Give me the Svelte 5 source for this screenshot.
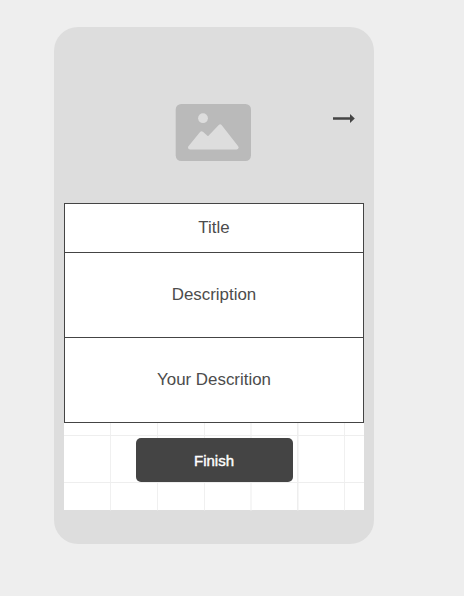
<script>
  const rows = [
    { label: 'Title', kind: 'title' },
    { label: 'Description', kind: 'text' },
    { label: 'Your Descrition', kind: 'text' }
  ];
  const columns = [
    { x: 46, w: 1, c: '#f0f0f0' },
    { x: 93, w: 1, c: '#f0f0f0' },
    { x: 140, w: 1, c: '#f0f0f0' },
    { x: 186, w: 2, c: '#f6f6f6' },
    { x: 233, w: 1.5, c: '#eeeeee' },
    { x: 280, w: 1, c: '#f0f0f0' }
  ];
  const lines = [12, 59];
</script>

<main>
  <section class="phone">
    <header>
      <svg class="picture" width="76" height="58" viewBox="0 0 76 58" aria-hidden="true">
        <rect x="0.7" y="0" width="75.3" height="57" rx="5.5" fill="#bababa" />
        <circle cx="28" cy="14.2" r="4.9" fill="#dddddd" />
        <path d="M15 43.4L26.6 29.3L33 35.1L45.2 22.4L61.6 43.4Z" fill="#dddddd" stroke="#dddddd" stroke-width="4" stroke-linejoin="round" />
      </svg>
      <svg class="arrow" width="24" height="12" viewBox="0 0 24 12" aria-hidden="true">
        <path d="M1 5.2H18V2L22.8 6.5L18 11V7.8H1Z" fill="#444444" />
      </svg>
    </header>
    <div class="rows">
      {#each rows as row}
        <div class="row {row.kind}">{row.label}</div>
      {/each}
    </div>
    <footer>
      <svg class="grid" width="300" height="88" viewBox="0 0 300 88" aria-hidden="true">
        {#each columns as col}
          <rect x={col.x} y="0" width={col.w} height="87" fill={col.c} />
          <rect x={col.x} y="87" width={col.w} height="1" fill="#e4e4e4" />
        {/each}
        {#each lines as y}
          <rect x="0" {y} width="300" height="1" fill="#eeeeee" />
        {/each}
      </svg>
      <button type="button">Finish</button>
    </footer>
  </section>
</main>

<style>
  :global(body) {
    background: #eeeeee;
  }
  main {
    box-sizing: border-box;
    height: 596px;
    padding: 27px 0 0 54px;
    background: #eeeeee;
    font-family: 'Liberation Sans', Arial, sans-serif;
  }
  .phone {
    box-sizing: border-box;
    width: 320px;
    height: 517px;
    padding: 0 10px;
    border-radius: 24px;
    background: #dddddd;
  }
  header {
    display: flex;
    justify-content: space-between;
    align-items: flex-start;
    box-sizing: border-box;
    height: 176px;
    padding: 77px 8px 0 111px;
  }
  .arrow {
    margin-top: 8px;
  }
  .rows {
    border: 1px solid #444444;
    background: #ffffff;
  }
  .row {
    display: flex;
    align-items: center;
    justify-content: center;
    height: 84px;
    color: #4c4c4c;
    font-size: 16.9px;
    line-height: 20px;
  }
  .title {
    height: 48px;
  }
  .row + .row {
    border-top: 1px solid #444444;
  }
  footer {
    position: relative;
    display: flex;
    justify-content: center;
    align-items: flex-start;
    box-sizing: border-box;
    height: 87px;
    padding: 15px 0 0 1px;
    background: #ffffff;
  }
  .grid {
    position: absolute;
    left: 0;
    top: 0;
  }
  button {
    position: relative;
    width: 157px;
    height: 44px;
    padding: 1px 1px 0 0;
    border: 0;
    border-radius: 5px;
    background: #444444;
    color: #ffffff;
    font: 15px/18px 'Liberation Sans', Arial, sans-serif;
    -webkit-text-stroke: 0.4px #ffffff;
  }
</style>
